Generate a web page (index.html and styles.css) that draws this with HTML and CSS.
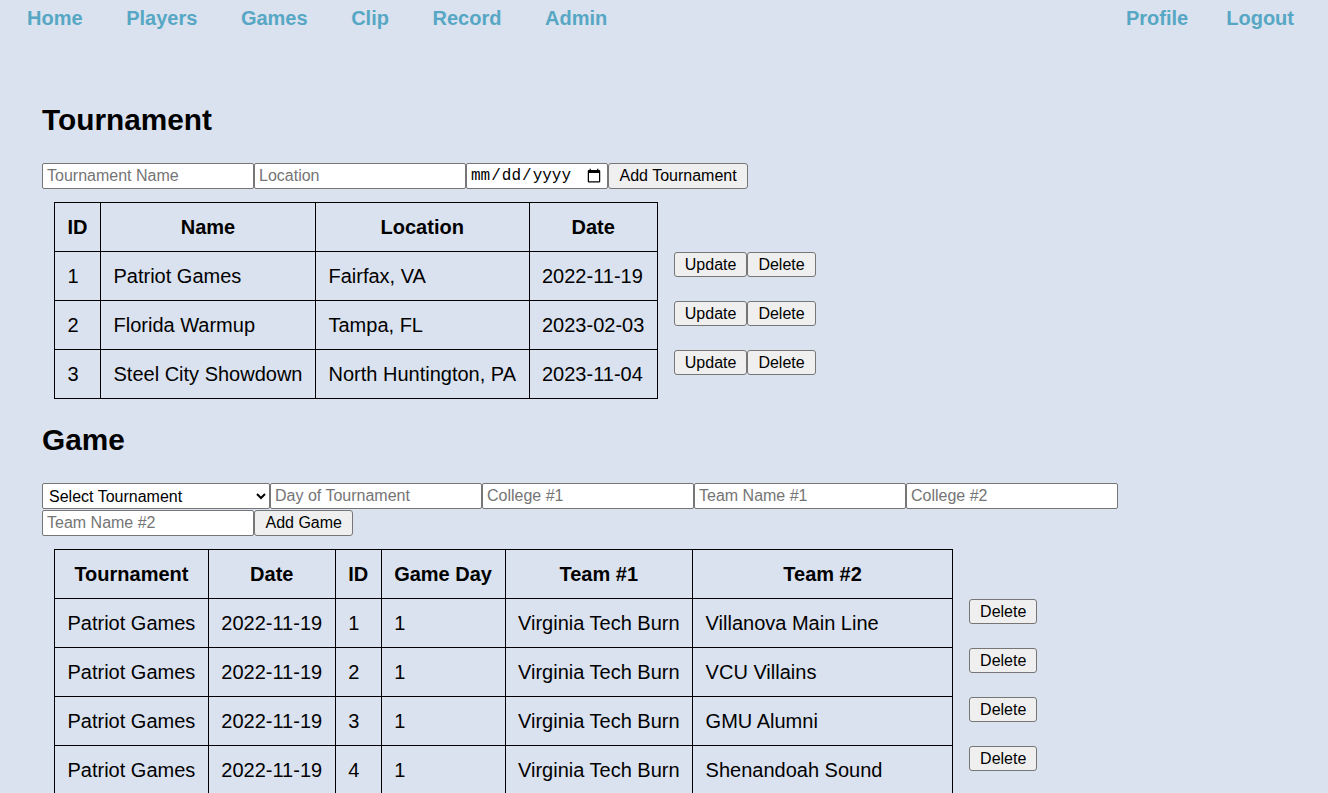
FILE: index.html
```html
<!DOCTYPE html>
<html lang="en">
<head>
<meta charset="utf-8">
<title>Admin</title>
<link rel="stylesheet" href="styles.css">
</head>
<body>
<nav class="nav">
  <div class="nav-left">
    <a class="nav-link" href="#">Home</a>
    <a class="nav-link" href="#">Players</a>
    <a class="nav-link" href="#">Games</a>
    <a class="nav-link" href="#">Clip</a>
    <a class="nav-link" href="#">Record</a>
    <a class="nav-link" href="#">Admin</a>
  </div>
  <div class="nav-right"><a class="nav-link" href="#">Profile</a><a class="nav-link" href="#">Logout</a></div>
</nav>
<main class="main">
  <h2 class="section-title">Tournament</h2>
  <form class="form-row">
    <input class="field" type="text" placeholder="Tournament Name">
    <input class="field" type="text" placeholder="Location">
    <input class="field field-date" type="date">
    <button class="btn btn-add" type="button">Add Tournament</button>
  </form>
  <table class="data-table">
    <thead>
      <tr><th>ID</th><th>Name</th><th>Location</th><th>Date</th></tr>
    </thead>
    <tbody>
      <tr><td>1</td><td>Patriot Games</td><td>Fairfax, VA</td><td>2022-11-19</td><td class="actions"><button class="btn btn-row" type="button">Update</button><button class="btn btn-row" type="button">Delete</button></td></tr>
      <tr><td>2</td><td>Florida Warmup</td><td>Tampa, FL</td><td>2023-02-03</td><td class="actions"><button class="btn btn-row" type="button">Update</button><button class="btn btn-row" type="button">Delete</button></td></tr>
      <tr><td>3</td><td>Steel City Showdown</td><td>North Huntington, PA</td><td>2023-11-04</td><td class="actions"><button class="btn btn-row" type="button">Update</button><button class="btn btn-row" type="button">Delete</button></td></tr>
    </tbody>
  </table>

  <h2 class="section-title section-game">Game</h2>
  <form class="form-row">
    <select class="field field-select">
      <option>Select Tournament</option>
      <option>Patriot Games</option>
      <option>Florida Warmup</option>
      <option>Steel City Showdown</option>
    </select>
    <input class="field" type="text" placeholder="Day of Tournament">
    <input class="field" type="text" placeholder="College #1">
    <input class="field" type="text" placeholder="Team Name #1">
    <input class="field" type="text" placeholder="College #2">
    <input class="field" type="text" placeholder="Team Name #2">
    <button class="btn btn-add" type="button">Add Game</button>
  </form>
  <table class="data-table">
    <thead>
      <tr><th>Tournament</th><th>Date</th><th>ID</th><th>Game Day</th><th>Team #1</th><th class="col-team2">Team #2</th></tr>
    </thead>
    <tbody>
      <tr><td>Patriot Games</td><td>2022-11-19</td><td>1</td><td>1</td><td>Virginia Tech Burn</td><td>Villanova Main Line</td><td class="actions"><button class="btn btn-row" type="button">Delete</button></td></tr>
      <tr><td>Patriot Games</td><td>2022-11-19</td><td>2</td><td>1</td><td>Virginia Tech Burn</td><td>VCU Villains</td><td class="actions"><button class="btn btn-row" type="button">Delete</button></td></tr>
      <tr><td>Patriot Games</td><td>2022-11-19</td><td>3</td><td>1</td><td>Virginia Tech Burn</td><td>GMU Alumni</td><td class="actions"><button class="btn btn-row" type="button">Delete</button></td></tr>
      <tr><td>Patriot Games</td><td>2022-11-19</td><td>4</td><td>1</td><td>Virginia Tech Burn</td><td>Shenandoah Sound</td><td class="actions"><button class="btn btn-row" type="button">Delete</button></td></tr>
      <tr><td>Patriot Games</td><td>2022-11-19</td><td>5</td><td>2</td><td>Virginia Tech Burn</td><td>Villanova Main Line</td><td class="actions"><button class="btn btn-row" type="button">Delete</button></td></tr>
    </tbody>
  </table>
</main>
</body>
</html>
```

FILE: styles.css
```css
html {
  background: #dbe2ef;
}

body {
  margin: 8px;
  background: #dbe2ef;
  font-family: "Liberation Sans", Arial, sans-serif;
  color: #000;
}

.nav {
  display: flex;
  justify-content: space-between;
  align-items: flex-start;
  font-size: 20px;
  font-weight: bold;
  line-height: 21px;
  margin-bottom: 2px;
}

.nav-right {
  margin-right: 7px;
}

.nav-link {
  color: #56a7c4;
  text-decoration: none;
  padding: 0 19px;
}

.main {
  padding: 72px 34px 0 34px;
}

.section-title {
  font-size: 29.8px;
  font-weight: bold;
  line-height: 34px;
  margin: 0 0 26px 0;
}

.section-game {
  margin-top: 24px;
}

.form-row {
  display: flex;
  flex-wrap: wrap;
  align-items: flex-start;
  row-gap: 1px;
  margin: 0;
}

.field {
  box-sizing: border-box;
  width: 212px;
  height: 26px;
  margin: 0;
  padding: 1px 4px;
  border: 1px solid #767676;
  border-radius: 2px;
  background: #fff;
  font-family: "Liberation Sans", Arial, sans-serif;
  font-size: 16px;
  color: #000;
}

.field::placeholder {
  color: #757575;
}

.field-date {
  width: 142px;
  padding: 1px 3px;
  font-family: "Liberation Mono", "Courier New", monospace;
  font-size: 16px;
}

.field-select {
  width: 228px;
  padding: 1px 2px;
}

.btn {
  box-sizing: border-box;
  margin: 0;
  font-family: "Liberation Sans", Arial, sans-serif;
  font-size: 16px;
  color: #000;
  background: #efefef;
  border: 1px solid #767676;
  border-radius: 3px;
  cursor: pointer;
}

.btn-add {
  height: 26px;
  padding: 0 10.5px;
  line-height: 22px;
}

.btn-row {
  height: 25px;
  padding: 0 10px;
  line-height: 21px;
}

.data-table {
  border-collapse: collapse;
  margin: 13px 0 0 12px;
  font-size: 20px;
}

.data-table th,
.data-table td {
  border: 1px solid #000;
  padding: 12px 12.5px;
  line-height: 24px;
  white-space: nowrap;
}

.data-table th {
  font-weight: bold;
  text-align: center;
}

.data-table td {
  text-align: left;
}

.data-table td.actions {
  border: none;
  padding: 0 0 0 16px;
  vertical-align: top;
  line-height: 0;
}

.data-table td.actions .btn {
  vertical-align: top;
}

.col-team2 {
  width: 234px;
}
```
